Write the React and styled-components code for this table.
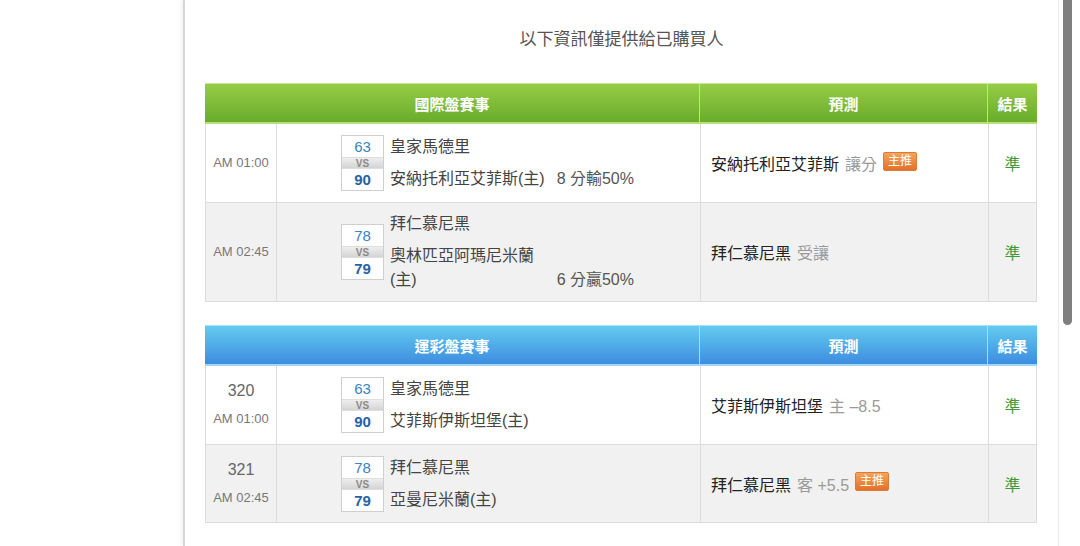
import styled, { createGlobalStyle } from "styled-components";

const GlobalStyle = createGlobalStyle`
  html, body {
    margin: 0;
    padding: 0;
    background: #ffffff;
    font-family: "Liberation Sans", "Noto Sans CJK TC", sans-serif;
    color: #333;
  }
  * { box-sizing: border-box; }
`;

const themes = {
  green: {
    bg: "linear-gradient(#95cd47, #6aab2b)",
    top: "#c6e88f",
    bottom: "#b6df7b",
    divider: "#c4e58f",
  },
  blue: {
    bg: "linear-gradient(#63cbef, #3d8de0)",
    top: "#a5e0f6",
    bottom: "#a2d7f4",
    divider: "#a9dbf4",
  },
};

const Page = styled.div`
  position: relative;
  display: flex;
  width: 1080px;
  height: 546px;
  overflow: hidden;
`;

const LeftSpace = styled.div`
  width: 183px;
  flex: none;
`;

const Panel = styled.main`
  width: 876px;
  flex: none;
  border-left: 2px solid #d6d6d6;
  border-right: 1px solid #ececec;
  box-shadow: -2px 0 4px rgba(0, 0, 0, 0.06);
  padding: 28px 20px 0 20px;
`;

const Notice = styled.p`
  margin: 0 0 31px;
  text-align: center;
  font-size: 17px;
  line-height: 24px;
  color: #555;
`;

const Board = styled.section`
  width: 832px;
  border: 1px solid #dcdcdc;
  border-top: none;
  margin-bottom: 23px;
`;

const HeadRow = styled.div`
  display: grid;
  grid-template-columns: 494px 288px 1fr;
  height: 41px;
  background: ${(p) => themes[p.theme].bg};
  border-top: 1px solid ${(p) => themes[p.theme].top};
  border-bottom: 2px solid ${(p) => themes[p.theme].bottom};
  margin: 0 -1px;
`;

const HeadCell = styled.div`
  display: flex;
  align-items: center;
  justify-content: center;
  color: #fff;
  font-size: 15px;
  font-weight: bold;
  & + & {
    border-left: 1px solid ${(p) => themes[p.theme].divider};
  }
`;

const Row = styled.div`
  display: grid;
  grid-template-columns: 70px 424px 288px 1fr;
  min-height: 78px;
  background: ${(p) => (p.alt ? "#f1f1f1" : "#fff")};
  & + & {
    border-top: 1px solid #dcdcdc;
  }
`;

const Cell = styled.div`
  display: flex;
  flex-direction: ${(p) => (p.stack ? "column" : "row")};
  align-items: center;
  justify-content: ${(p) => p.justify || "center"};
  padding: 5px ${(p) => (p.justify ? "10px" : "0")};
  & + & {
    border-left: 1px solid #dcdcdc;
  }
`;

const GameNo = styled.div`
  font-size: 16px;
  line-height: 28px;
  color: #666;
`;

const Time = styled.div`
  font-size: 13px;
  line-height: 28px;
  color: #777;
`;

const Match = styled.div`
  display: flex;
  align-items: center;
  gap: 6px;
  margin-left: -2px;
`;

const ScoreBox = styled.div`
  width: 43px;
  border: 1px solid #cfcfcf;
  background: #fff;
  display: flex;
  flex-direction: column;
  align-items: center;
`;

const Score = styled.div`
  width: 100%;
  height: 21px;
  line-height: 21px;
  text-align: center;
  font-size: 15px;
  color: ${(p) => (p.strong ? "#2463a3" : "#3a82c4")};
  font-weight: ${(p) => (p.strong ? "bold" : "normal")};
`;

const Versus = styled.div`
  width: 100%;
  height: 12px;
  line-height: 12px;
  text-align: center;
  font-size: 10px;
  font-weight: bold;
  color: #8a8a8a;
  background: linear-gradient(#eeeeee, #d4d4d4);
  border-top: 1px solid #dedede;
  border-bottom: 1px solid #dedede;
`;

const Teams = styled.div`
  width: 244px;
  font-size: 16px;
  color: #444;
`;

const TeamLine = styled.div`
  display: flex;
  justify-content: space-between;
  align-items: flex-end;
  padding: 4px 0;
  line-height: 24px;
`;

const TeamName = styled.span`
  flex: 0 1 auto;
`;

const Handicap = styled.span`
  flex: none;
  margin-left: 6px;
  color: #555;
`;

const Pick = styled.span`
  font-size: 16px;
  color: #222;
`;

const Note = styled.span`
  margin-left: 6px;
  color: #9a9a9a;
  font-size: 16px;
`;

const Hot = styled.span`
  display: inline-block;
  margin-left: 6px;
  height: 19px;
  line-height: 17px;
  padding: 0 4px;
  font-size: 12px;
  color: #fff;
  border: 1px solid #e07a2e;
  border-radius: 2px;
  background: linear-gradient(#f4a45a, #e2712b);
  position: relative;
  top: -2px;
`;

const Result = styled.span`
  font-size: 16px;
  color: #3c9a3c;
`;

const Scrollbar = styled.div`
  position: absolute;
  left: 1063px;
  top: -6px;
  width: 9px;
  height: 331px;
  border-radius: 5px;
  background: #7f7f7f;
`;

const boards = [
  {
    title: "國際盤賽事",
    theme: "green",
    rows: [
      { time: "AM 01:00", s1: 63, s2: 90, t1: "皇家馬德里", t2: "安納托利亞艾菲斯(主)", hc: "8 分輸50%", pick: "安納托利亞艾菲斯", note: "讓分", hot: true },
      { time: "AM 02:45", s1: 78, s2: 79, t1: "拜仁慕尼黑", t2: "奧林匹亞阿瑪尼米蘭(主)", hc: "6 分贏50%", pick: "拜仁慕尼黑", note: "受讓" },
    ],
  },
  {
    title: "運彩盤賽事",
    theme: "blue",
    rows: [
      { no: "320", time: "AM 01:00", s1: 63, s2: 90, t1: "皇家馬德里", t2: "艾菲斯伊斯坦堡(主)", pick: "艾菲斯伊斯坦堡", note: "主 –8.5" },
      { no: "321", time: "AM 02:45", s1: 78, s2: 79, t1: "拜仁慕尼黑", t2: "亞曼尼米蘭(主)", pick: "拜仁慕尼黑", note: "客 +5.5", hot: true },
    ],
  },
];

export default function App() {
  return (
    <Page>
      <GlobalStyle />
      <LeftSpace />
      <Panel>
        <Notice>以下資訊僅提供給已購買人</Notice>
        {boards.map((board) => (
          <Board key={board.title}>
            <HeadRow theme={board.theme}>
              <HeadCell theme={board.theme}>{board.title}</HeadCell>
              <HeadCell theme={board.theme}>預測</HeadCell>
              <HeadCell theme={board.theme}>結果</HeadCell>
            </HeadRow>
            {board.rows.map((r, i) => (
              <Row key={i} alt={i % 2 === 1}>
                <Cell stack>
                  {r.no && <GameNo>{r.no}</GameNo>}
                  <Time>{r.time}</Time>
                </Cell>
                <Cell>
                  <Match>
                    <ScoreBox>
                      <Score>{r.s1}</Score>
                      <Versus>VS</Versus>
                      <Score strong>{r.s2}</Score>
                    </ScoreBox>
                    <Teams>
                      <TeamLine>
                        <TeamName>{r.t1}</TeamName>
                      </TeamLine>
                      <TeamLine>
                        <TeamName>{r.t2}</TeamName>
                        {r.hc && <Handicap>{r.hc}</Handicap>}
                      </TeamLine>
                    </Teams>
                  </Match>
                </Cell>
                <Cell justify="flex-start">
                  <Pick>{r.pick}</Pick>
                  <Note>{r.note}</Note>
                  {r.hot && <Hot>主推</Hot>}
                </Cell>
                <Cell>
                  <Result>準</Result>
                </Cell>
              </Row>
            ))}
          </Board>
        ))}
      </Panel>
      <Scrollbar />
    </Page>
  );
}
